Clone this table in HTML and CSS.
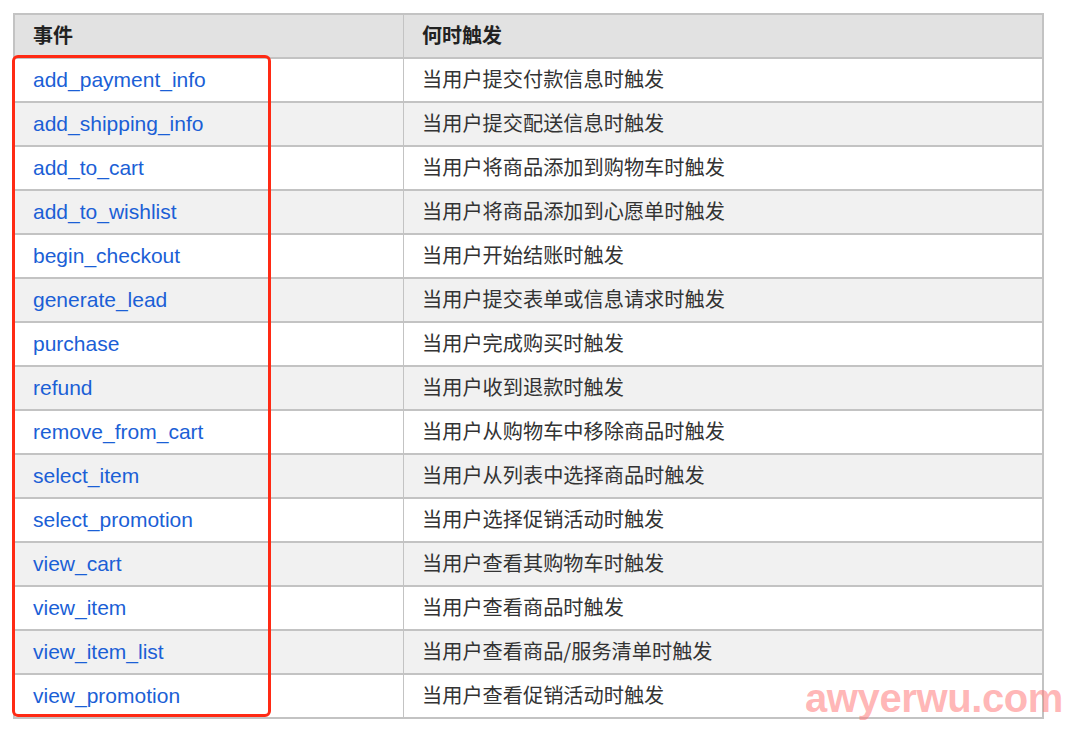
FILE: index.html
```html
<!DOCTYPE html>
<html lang="zh">
<head>
<meta charset="utf-8">
<title>事件</title>
<link rel="stylesheet" href="styles.css">
</head>
<body>
<div class="page">
  <div class="table">
    <div class="row head"><div class="c1">事件</div><div class="c2">何时触发</div></div>
    <div class="row"><div class="c1"><a>add_payment_info</a></div><div class="c2">当用户提交付款信息时触发</div></div>
    <div class="row alt"><div class="c1"><a>add_shipping_info</a></div><div class="c2">当用户提交配送信息时触发</div></div>
    <div class="row"><div class="c1"><a>add_to_cart</a></div><div class="c2">当用户将商品添加到购物车时触发</div></div>
    <div class="row alt"><div class="c1"><a>add_to_wishlist</a></div><div class="c2">当用户将商品添加到心愿单时触发</div></div>
    <div class="row"><div class="c1"><a>begin_checkout</a></div><div class="c2">当用户开始结账时触发</div></div>
    <div class="row alt"><div class="c1"><a>generate_lead</a></div><div class="c2">当用户提交表单或信息请求时触发</div></div>
    <div class="row"><div class="c1"><a>purchase</a></div><div class="c2">当用户完成购买时触发</div></div>
    <div class="row alt"><div class="c1"><a>refund</a></div><div class="c2">当用户收到退款时触发</div></div>
    <div class="row"><div class="c1"><a>remove_from_cart</a></div><div class="c2">当用户从购物车中移除商品时触发</div></div>
    <div class="row alt"><div class="c1"><a>select_item</a></div><div class="c2">当用户从列表中选择商品时触发</div></div>
    <div class="row"><div class="c1"><a>select_promotion</a></div><div class="c2">当用户选择促销活动时触发</div></div>
    <div class="row alt"><div class="c1"><a>view_cart</a></div><div class="c2">当用户查看其购物车时触发</div></div>
    <div class="row"><div class="c1"><a>view_item</a></div><div class="c2">当用户查看商品时触发</div></div>
    <div class="row alt"><div class="c1"><a>view_item_list</a></div><div class="c2">当用户查看商品/服务清单时触发</div></div>
    <div class="row"><div class="c1"><a>view_promotion</a></div><div class="c2">当用户查看促销活动时触发</div></div>
    <div class="highlight"></div>
  </div>
  <div class="watermark">awyerwu.com</div>
</div>
</body>
</html>
```

FILE: styles.css
```css
html, body {
  margin: 0;
  padding: 0;
  background: #ffffff;
}
.page {
  position: relative;
  width: 1080px;
  height: 729px;
  padding: 13px 0 0 13px;
  box-sizing: border-box;
  font-family: "Liberation Sans", "Noto Sans CJK SC", sans-serif;
}
.table {
  position: relative;
  width: 1031px;
  border: 2px solid #c3c3c3;
  box-sizing: border-box;
}
.row {
  display: grid;
  grid-template-columns: 388px 1fr;
  height: 44px;
  box-sizing: border-box;
  border-top: 2px solid #c3c3c3;
  background: #ffffff;
}
.row.head {
  height: 42px;
  border-top: none;
  background: #e2e2e2;
}
.row.alt {
  background: #f1f1f1;
}
.c1, .c2 {
  display: flex;
  align-items: center;
  padding-left: 18px;
  box-sizing: border-box;
}
.c2 {
  border-left: 1px solid #c3c3c3;
  padding-left: 18px;
  padding-bottom: 3px;
  font-size: 20.2px;
  color: #333333;
  font-family: "Noto Sans CJK SC", sans-serif;
}
.c1 a {
  color: #1b5fd6;
  font-size: 21px;
  text-decoration: none;
}
.head .c1, .head .c2 {
  font-family: "Noto Sans CJK SC", sans-serif;
  font-weight: bold;
  font-size: 20px;
  color: #222222;
  padding-bottom: 3px;
}
.highlight {
  position: absolute;
  left: -3px;
  top: 40px;
  width: 259px;
  height: 662px;
  border: 3px solid #ff2a14;
  border-radius: 6px;
  box-sizing: border-box;
}
.watermark {
  position: absolute;
  left: 805px;
  top: 678px;
  font-family: "Liberation Sans", sans-serif;
  font-weight: bold;
  font-size: 40px;
  line-height: 40px;
  color: rgba(255, 120, 120, 0.55);
  letter-spacing: -0.4px;
}
```
